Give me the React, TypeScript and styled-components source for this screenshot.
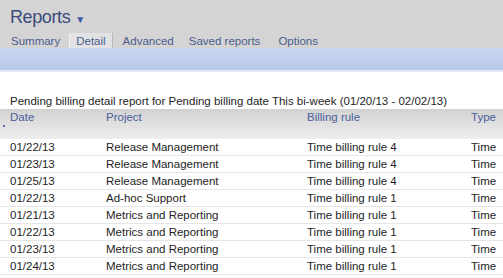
import React from "react";
import styled, { createGlobalStyle } from "styled-components";

const Global = createGlobalStyle`
  html, body { margin: 0; padding: 0; background: #fff; }
  body { font-family: "Liberation Sans", Arial, sans-serif; overflow: hidden; }
`;

const Page = styled.div`
  width: 503px;
  height: 278px;
  overflow: hidden;
  background: #fff;
`;

const Header = styled.div`
  background: #d4d4d4;
  padding: 6px 0 0 10px;
  height: 42px;
  display: flex;
  flex-direction: column;
`;

const Title = styled.div`
  display: flex;
  align-items: center;
  gap: 5px;
  font-size: 18px;
  letter-spacing: -0.4px;
  color: #3a4b7c;
  height: 22px;
`;

const Caret = styled.span`
  font-size: 10px;
  color: #3a5aa8;
  margin-top: 4px;
`;

const Tabs = styled.div`
  display: flex;
  align-items: stretch;
  margin-top: 5px;
  height: 15px;
  margin-left: 1px;
`;

const Tab = styled.div<{ $active?: boolean; $gap: number }>`
  font-size: 11.5px;
  color: #4a5c8e;
  padding: ${(p) => (p.$active ? "1px 6px 0 6px" : "1px 0 0 0")};
  margin-right: ${(p) => p.$gap}px;
  background: ${(p) => (p.$active ? "#e2e2e4" : "transparent")};
  border-left: ${(p) => (p.$active ? "1px solid #f2f2f2" : "none")};
  border-right: ${(p) => (p.$active ? "1px solid #b8b8b8" : "none")};
  line-height: 14px;
`;

const Band = styled.div`
  height: 22px;
  background: linear-gradient(#cbd7f1, #b8c8ea);
  border-bottom: 2px solid #e2e7f5;
`;

const Caption = styled.div`
  font-size: 11.5px;
  color: #1e1e1e;
  padding: 22px 0 0 10px;
  height: 14px;
  line-height: 14px;
`;

const Table = styled.div`
  margin-top: 1px;
`;

const Row = styled.div`
  display: grid;
  grid-template-columns: 96px 201px 164px 1fr;
  padding-left: 10px;
  height: 16px;
  line-height: 16px;
  border-bottom: 1px solid #e6e6e6;
  font-size: 11.5px;
  color: #1e1e1e;
  white-space: nowrap;
`;

const HeadRow = styled(Row)`
  position: relative;
  height: 30px;
  line-height: 16px;
  color: #4a5e9a;
  border-bottom: none;
  background: linear-gradient(#d2d2d2, #eeeeee);
`;

const SortDot = styled.span`
  position: absolute;
  left: 3px;
  top: 16px;
  width: 2px;
  height: 2px;
  background: #5a6fa8;
`;

const tabs = [
  { label: "Summary", gap: 9 },
  { label: "Detail", gap: 10, active: true },
  { label: "Advanced", gap: 15 },
  { label: "Saved reports", gap: 18 },
  { label: "Options", gap: 0 },
];

const rows = [
  ["01/22/13", "Release Management", "Time billing rule 4", "Time"],
  ["01/23/13", "Release Management", "Time billing rule 4", "Time"],
  ["01/25/13", "Release Management", "Time billing rule 4", "Time"],
  ["01/22/13", "Ad-hoc Support", "Time billing rule 1", "Time"],
  ["01/21/13", "Metrics and Reporting", "Time billing rule 1", "Time"],
  ["01/22/13", "Metrics and Reporting", "Time billing rule 1", "Time"],
  ["01/23/13", "Metrics and Reporting", "Time billing rule 1", "Time"],
  ["01/24/13", "Metrics and Reporting", "Time billing rule 1", "Time"],
];

export default function App() {
  return (
    <Page>
      <Global />
      <Header>
        <Title>
          Reports <Caret>▼</Caret>
        </Title>
        <Tabs>
          {tabs.map((t) => (
            <Tab key={t.label} $active={t.active} $gap={t.gap}>
              {t.label}
            </Tab>
          ))}
        </Tabs>
      </Header>
      <Band />
      <Caption>
        Pending billing detail report for Pending billing date This bi-week (01/20/13 - 02/02/13)
      </Caption>
      <Table>
        <HeadRow>
          <SortDot />
          <span>Date</span>
          <span>Project</span>
          <span>Billing rule</span>
          <span>Type</span>
        </HeadRow>
        {rows.map((r, i) => (
          <Row key={i}>
            {r.map((c, j) => (
              <span key={j}>{c}</span>
            ))}
          </Row>
        ))}
      </Table>
    </Page>
  );
}
